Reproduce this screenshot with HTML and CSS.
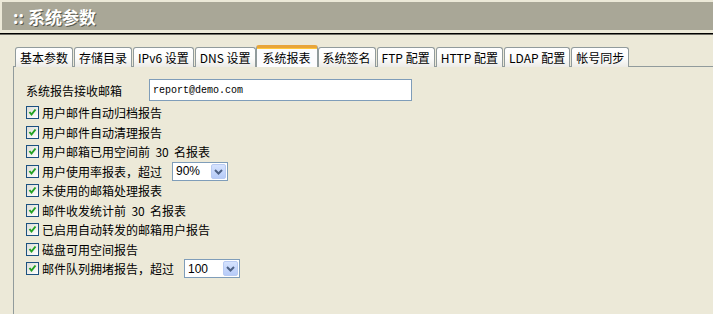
FILE: index.html
```html
<!doctype html>
<html>

<head>
    <title>系统参数</title>
    <link rel="stylesheet" href="styles.css">
</head>

<body>
    <div class="titleBar">
        <h1>:: 系统参数</h1>
    </div>
    <div class="titleRule"></div>

    <ul class="tabs">
        <li class="tab">基本参数</li>
        <li class="tab">存储目录</li>
        <li class="tab">IPv6 设置</li>
        <li class="tab">DNS 设置</li>
        <li class="tab active">系统报表</li>
        <li class="tab">系统签名</li>
        <li class="tab">FTP 配置</li>
        <li class="tab">HTTP 配置</li>
        <li class="tab">LDAP 配置</li>
        <li class="tab">帐号同步</li>
    </ul>

    <div class="panel">
        <div class="mailRow">
            <label class="mailLabel" for="reportMail">系统报告接收邮箱</label>
            <input id="reportMail" class="mailInput" type="text" value="report@demo.com">
        </div>

        <div class="checkRow"><span class="check"></span>用户邮件自动归档报告</div>
        <div class="checkRow"><span class="check"></span>用户邮件自动清理报告</div>
        <div class="checkRow"><span class="check"></span>用户邮箱已用空间前&nbsp; 30&nbsp; 名报表</div>
        <div class="checkRow"><span class="check"></span>用户使用率报表，超过
            <div class="combo">
                <span class="comboValue">90%</span>
                <span class="comboButton"></span>
            </div>
        </div>
        <div class="checkRow"><span class="check"></span>未使用的邮箱处理报表</div>
        <div class="checkRow"><span class="check"></span>邮件收发统计前&nbsp; 30&nbsp; 名报表</div>
        <div class="checkRow"><span class="check"></span>已启用自动转发的邮箱用户报告</div>
        <div class="checkRow"><span class="check"></span>磁盘可用空间报告</div>
        <div class="checkRow"><span class="check"></span>邮件队列拥堵报告，超过
            <div class="combo">
                <span class="comboValue">100</span>
                <span class="comboButton"></span>
            </div>
        </div>
    </div>
</body>

</html>
```

FILE: styles.css
```css
* {
    margin: 0;
    padding: 0;
    box-sizing: border-box;
}

body {
    font: 12px "Noto Sans CJK SC", "Liberation Sans", sans-serif;
    background-color: #ece9d8;
    color: #000;
    overflow: hidden;
}

.titleBar {
    margin: 2px 0 0 2px;
    height: 28px;
    background-color: #a9a797;
    display: flex;
    align-items: center;
    padding-left: 11px;
}

.titleBar h1 {
    font-size: 17px;
    font-weight: bold;
    color: #fff;
    text-shadow: 1px 1px 0 #5a5a50;
}

.titleRule {
    margin-top: 3px;
    height: 2px;
    border-top: 1px solid #000;
    border-bottom: 1px solid #6e6d65;
}

.tabs {
    list-style: none;
    display: flex;
    align-items: flex-end;
    gap: 1px;
    margin-top: 10px;
    padding-left: 15px;
    height: 22px;
    position: relative;
    z-index: 1;
    margin-bottom: -1px;
}

.tab {
    height: 20px;
    padding: 0 4px;
    border: 1px solid #919b9c;
    border-bottom: none;
    border-radius: 3px 3px 0 0;
    background: linear-gradient(#ffffff, #fcfcfb 55%, #ecebe6);
    display: flex;
    align-items: center;
    line-height: 1;
    white-space: nowrap;
}

.tab.active {
    height: 22px;
    margin: 0 -1px;
    padding: 0 6px;
    background: #fcfcfe;
    border-top: 3px solid #e8a53a;
    box-shadow: inset 0 1px 0 #ffc83c;
}

.panel {
    margin-left: 13px;
    border-left: 1px solid #919b9c;
    border-top: 1px solid #919b9c;
    height: 260px;
    padding: 12px 0 0 12px;
}

.mailRow {
    display: flex;
    align-items: center;
    height: 22px;
    margin-bottom: 2px;
}

.mailLabel {
    width: 123px;
}

.mailInput {
    width: 263px;
    height: 22px;
    border: 1px solid #7f9db9;
    background: #fff;
    font: 10px "Liberation Mono", monospace;
    padding-left: 3px;
    color: #000;
}

.checkRow {
    display: flex;
    align-items: center;
    height: 19.5px;
    white-space: nowrap;
}

.check {
    width: 13px;
    height: 13px;
    margin-right: 3px;
    border: 1px solid #1c5180;
    background: url("data:image/svg+xml;utf8,<svg xmlns='http://www.w3.org/2000/svg' width='11' height='11'><polyline points='2.5,5 4.5,7.5 8.5,2.5' fill='none' stroke='%2321a121' stroke-width='2'/></svg>") center no-repeat,
        linear-gradient(135deg, #dcdcd7, #ffffff);
}

.combo {
    width: 56px;
    height: 19px;
    margin-left: 10px;
    border: 1px solid #7f9db9;
    background: #fff;
    display: flex;
    align-items: center;
    justify-content: space-between;
    padding: 1px;
}

.comboValue {
    padding-left: 2px;
    font: 12px "Liberation Sans", sans-serif;
}

.comboButton {
    width: 15px;
    height: 15px;
    border-radius: 2px;
    background: url("data:image/svg+xml;utf8,<svg xmlns='http://www.w3.org/2000/svg' width='15' height='15'><polyline points='4,6 7.5,9.5 11,6' fill='none' stroke='%234d6185' stroke-width='2'/></svg>") center no-repeat,
        linear-gradient(#d6e3fe, #b6cbf8);
    border: 1px solid #b9cbf3;
}
```
